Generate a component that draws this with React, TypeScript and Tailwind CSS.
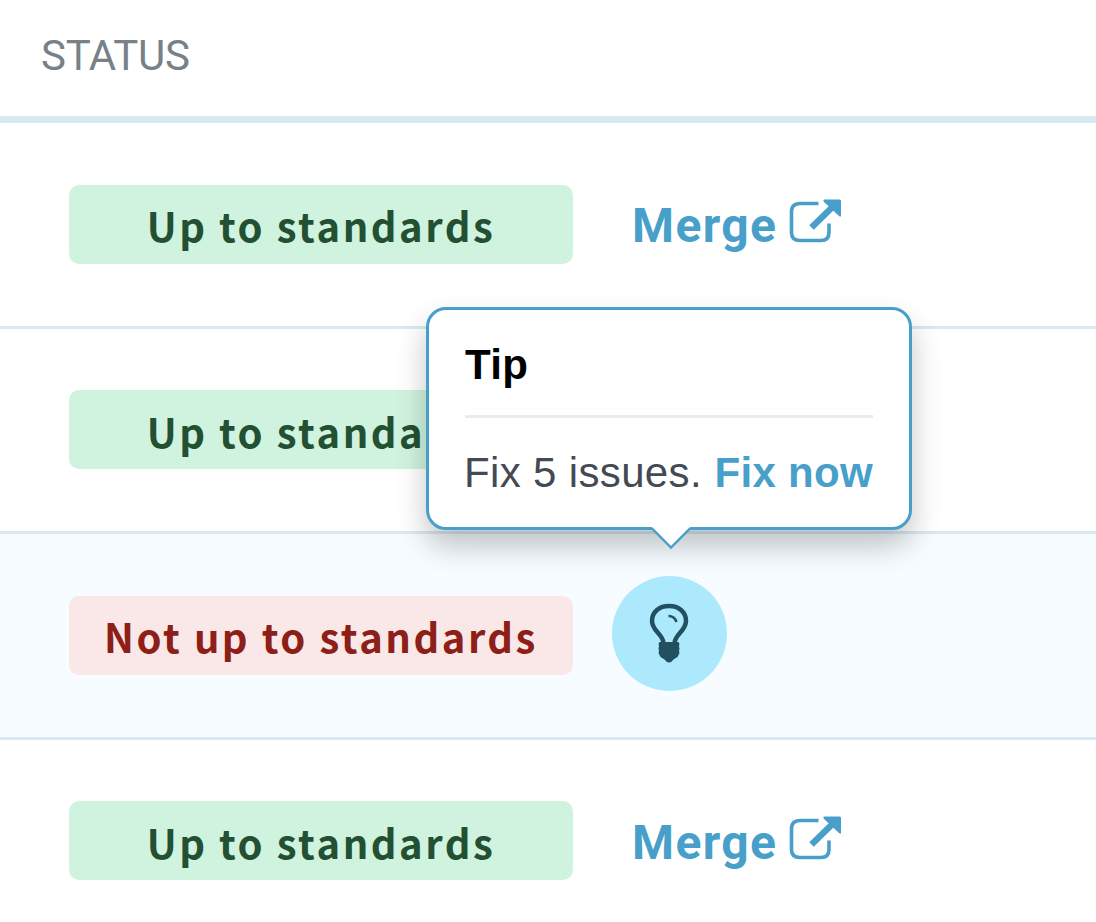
import type { ReactNode } from "react";

function StatusPill({ ok }: { ok: boolean }) {
  return (
    <div
      className={
        ok
          ? "flex h-[79px] w-[504px] shrink-0 items-center justify-center rounded-[10px] bg-[#d0f3df] text-[#235032]"
          : "flex h-[79px] w-[504px] shrink-0 items-center justify-center rounded-[10px] bg-[#fae8e8] text-[#8d1e18]"
      }
    >
      <span className="relative top-[1px] whitespace-nowrap font-['Noto_Sans_CJK_SC','Noto_Sans',sans-serif] text-[40px] leading-none font-bold tracking-[2.5px]">
        {ok ? "Up to standards" : "Not up to standards"}
      </span>
    </div>
  );
}

function MergeLink() {
  return (
    <a className="ml-[59px] flex h-[79px] items-center text-[#489fc9]">
      <span className="relative top-[2px] w-[146px] font-[Roboto,sans-serif] text-[48px] leading-none font-bold tracking-[1.4px]">
        Merge
      </span>
      <svg className="mb-[6px] ml-[10px] h-[48px] w-[54px] shrink-0" viewBox="0 0 54 48" fill="none">
        <path
          d="M30.5 6.500H12Q3.5 6.500 3.5 15V35.5Q3.5 43.500 12 43.500H33Q41 43.500 41 35.5V26.5"
          stroke="currentColor"
          strokeWidth="3.6"
        />
        <path d="M23.5 30.5L45 9.5" stroke="currentColor" strokeWidth="6.5" />
        <path d="M36.5 2.5H51.5Q53 2.5 53 4V18.500Q53 20.500 51 19L36 5Q34.500 2.500 36.500 2.500Z" fill="currentColor" />
      </svg>
    </a>
  );
}

function BulbButton() {
  return (
    <button className="mb-[4px] ml-[38.5px] flex size-[115px] items-center justify-center rounded-full bg-[#ade9fd] text-[#235061]">
      <svg className="h-[60px] w-[40px]" viewBox="0 0 40 60" fill="none">
        <path
          d="M14.5 40C14 31 3 28 3 18C3 8.500 10.500 3 20 3S37 8.500 37 18C37 28 26 31 25.500 40"
          stroke="currentColor"
          strokeWidth="4.500"
        />
        <path d="M19.500 13Q25.500 13 27.500 19" stroke="currentColor" strokeWidth="2.400" />
        <path
          d="M10.500 39H29.500L30.500 41L30 43L30.500 46L30 48L30.500 50L28.500 54L24.500 56.500Q22.500 59.500 20 59.500T15.500 56.500L11.500 54L9.500 50L10 48L9.500 46L10 43L9.500 41Z"
          fill="currentColor"
        />
      </svg>
    </button>
  );
}

function Tooltip() {
  return (
    <div className="absolute top-[307px] left-[426px] h-[223px] w-[486px] rounded-[20px] border-[3px] border-[#489fc9] bg-white px-[36px] pt-[34px] font-['Liberation_Sans',sans-serif] text-[42px] shadow-[0_16px_30px_rgba(0,0,0,0.23)]">
      <div className="h-[74px] border-b-[3px] border-[#ebebeb] leading-[42px] font-bold tracking-[0.4px] text-black">
        Tip
      </div>
      <div className="flex justify-between pt-[34px] leading-[42px] whitespace-nowrap text-[#434a53]">
        <span className="-ml-px tracking-[0.35px]">Fix 5 issues.</span>
        <a className="font-bold tracking-[0.3px] text-[#489fc9]">Fix now</a>
      </div>
      <svg className="absolute top-[216px] left-[222px] h-[26px] w-[40px]" viewBox="0 0 40 26">
        <path d="M0 0V2L20 22L40 2V0Z" fill="#fff" />
        <path d="M0 2.500H1L20 21.500L39 2.500H40" fill="none" stroke="#489fc9" strokeWidth="2.400" />
      </svg>
    </div>
  );
}

function Row({ ok, highlighted, children }: { ok: boolean; highlighted?: boolean; children?: ReactNode }) {
  return (
    <div
      className={
        highlighted
          ? "flex h-[205.5px] items-center border-b-[3px] border-[#d8e9f2] bg-[#f6fcff] pl-[69px]"
          : "flex h-[205.5px] items-center border-b-[3px] border-[#d8e9f2] pl-[69px]"
      }
    >
      <StatusPill ok={ok} />
      {children}
    </div>
  );
}

export default function App() {
  return (
    <div className="relative h-[922px] w-[1096px] overflow-hidden bg-white">
      <div className="flex h-[123px] items-center border-b-[7px] border-[#d8e9f2] pl-[41px] font-[Roboto,sans-serif] text-[42px] leading-none tracking-[-0.3px] text-[#778187]">
        <span className="relative -top-[2px]">STATUS</span>
      </div>
      <Row ok>
        <MergeLink />
      </Row>
      <Row ok />
      <Row ok={false} highlighted>
        <BulbButton />
      </Row>
      <Row ok>
        <MergeLink />
      </Row>
      <Tooltip />
    </div>
  );
}
